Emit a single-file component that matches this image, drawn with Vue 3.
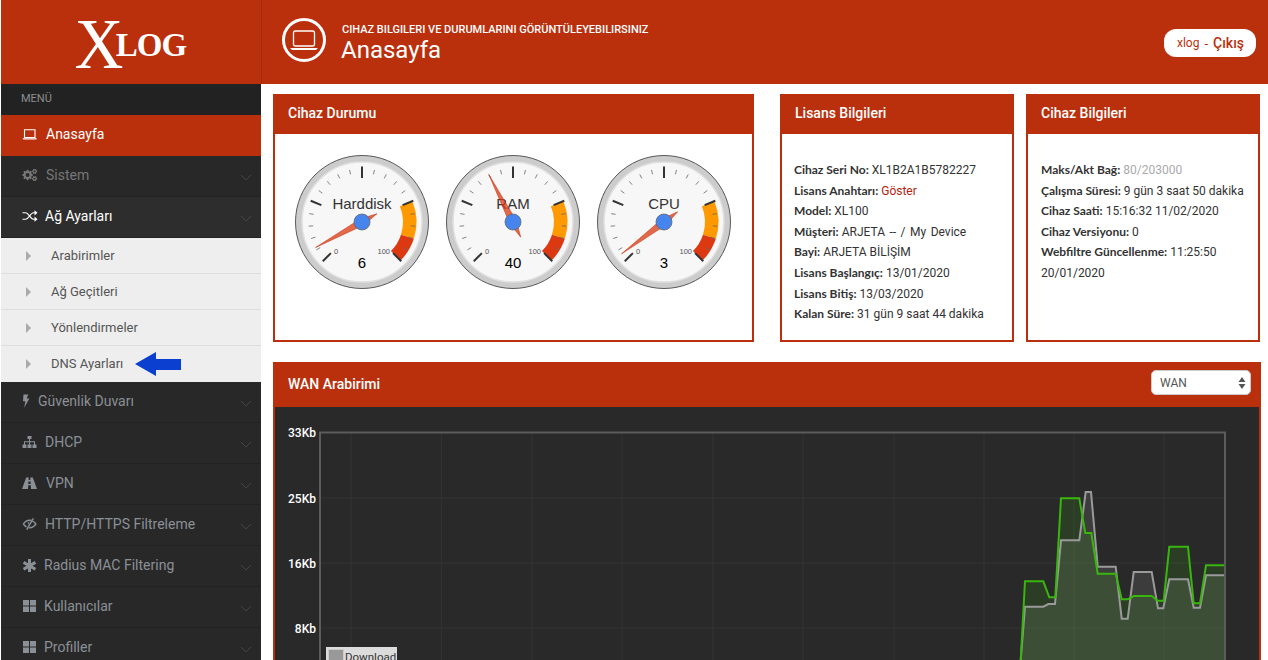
<template>
  <div class="page">
    <aside class="sidebar">
      <div class="logo">
        <span class="logo-x">X</span><span class="logo-log">LOG</span>
      </div>
      <div class="menu-label">MENÜ</div>
      <nav>
        <template v-for="item in menu" :key="item.label">
          <div class="menu-item" :class="{ active: item.active, open: item.open, dim: item.dim }">
            <span class="icon-box" :style="{ width: item.offset + 'px' }">
              <svg class="ico" width="16" height="14" viewBox="0 0 16 14">
                <path v-if="item.fill" :d="item.fill" fill="currentColor" fill-rule="evenodd" />
                <path v-if="item.line" :d="item.line" fill="none" stroke="currentColor" stroke-width="1.1" />
              </svg>
            </span>
            <span>{{ item.label }}</span>
            <svg v-if="!item.active" class="chevron" width="12" height="7" viewBox="0 0 12 7">
              <path d="M1 1l5 5 5-5" fill="none" stroke="currentColor" stroke-width="0.8" />
            </svg>
          </div>
          <div v-if="item.children" class="submenu">
            <div v-for="child in item.children" :key="child" class="sub-item">
              <span class="sub-arrow"></span>
              <span>{{ child }}</span>
              <svg v-if="child === 'DNS Ayarları'" class="blue-arrow" width="46" height="26" viewBox="0 0 46 26">
                <path d="M0 13L21 1v7h25v11H21v6z" fill="#0a3fd0" />
              </svg>
            </div>
          </div>
        </template>
      </nav>
    </aside>

    <div class="content">
      <header class="topbar">
        <svg class="top-icon" width="46" height="46" viewBox="0 0 46 46">
          <circle cx="23" cy="23" r="20.5" fill="none" stroke="#fff" stroke-width="3" />
          <rect x="12.5" y="14" width="21" height="15" rx="2" fill="none" stroke="#fff" stroke-width="1.3" />
          <path d="M9 31h28l-2 2H11z" fill="#fff" />
        </svg>
        <div class="top-text">
          <div class="top-sub">CIHAZ BILGILERI VE DURUMLARINI GÖRÜNTÜLEYEBILIRSINIZ</div>
          <div class="top-title">Anasayfa</div>
        </div>
        <div class="logout">
          <span class="user">xlog</span><span class="dash">-</span><span class="exit">Çıkış</span>
        </div>
      </header>

      <main class="main">
        <div class="top-row">
          <section class="panel status">
            <h3 class="panel-head">Cihaz Durumu</h3>
            <div class="gauges">
              <svg v-for="g in gauges" :key="g.name" width="140" height="140" viewBox="-70 -70 140 140">
                <circle r="66.5" fill="#ccc" stroke="#4a4a4a" stroke-width="0.9" />
                <circle r="60" fill="#f7f7f7" stroke="#e0e0e0" stroke-width="1.5" />
                <path :d="band(75, 90)" fill="#f90" />
                <path :d="band(90, 100)" fill="#dc3912" />
                <path v-for="t in minorTicks" :key="t" :d="tick(t, 49, 53.5)" stroke="#666" stroke-width="0.8" />
                <path v-for="t in majorTicks" :key="t" :d="tick(t, 44, 55.5)" stroke="#333" stroke-width="2" />
                <text class="g-title" y="-13" text-anchor="middle">{{ g.name }}</text>
                <text class="g-small" x="-28" y="32" text-anchor="start">0</text>
                <text class="g-small" x="28" y="32" text-anchor="end">100</text>
                <text class="g-value" y="46" text-anchor="middle">{{ g.value }}</text>
                <path :d="needle(g.value)" fill="#dc3912" fill-opacity="0.75" stroke="#c63310" stroke-width="0.6" />
                <circle r="8" fill="#4684ee" stroke="#666" stroke-width="0.8" />
              </svg>
            </div>
          </section>

          <section class="panel license">
            <h3 class="panel-head">Lisans Bilgileri</h3>
            <div class="info">
              <p v-for="row in license" :key="row[0]">
                <b>{{ row[0] }}:</b> <span :class="row[2]">{{ row[1] }}</span>
              </p>
            </div>
          </section>

          <section class="panel device">
            <h3 class="panel-head">Cihaz Bilgileri</h3>
            <div class="info">
              <p v-for="row in device" :key="row[0]">
                <b>{{ row[0] }}:</b> <span :class="row[2]">{{ row[1] }}</span>
              </p>
            </div>
          </section>
        </div>

        <section class="panel wan">
          <div class="panel-head wan-head">
            <h3>WAN Arabirimi</h3>
            <div class="fake-select">
              <span>WAN</span>
              <svg width="8" height="12" viewBox="0 0 8 12">
                <path d="M4 0l3.500 5h-7zM4 12L.5 7h7z" fill="#555" />
              </svg>
            </div>
          </div>
          <div class="chart">
            <svg width="984" height="300" viewBox="0 0 984 300">
              <path v-for="x in gridX" :key="x" :d="`M${x} 25V300`" stroke="#343434" />
              <path v-for="y in gridY" :key="y" :d="`M45 ${y}H950`" stroke="#343434" />
              <path :d="area(download)" fill="#fff" fill-opacity="0.09" />
              <path :d="area(upload)" fill="#45b51a" fill-opacity="0.15" />
              <path :d="line(download)" fill="none" stroke="#9a9a9a" stroke-width="2" />
              <path :d="line(upload)" fill="none" stroke="#38b60e" stroke-width="2" />
              <path d="M45 300V25.500H950V300" fill="none" stroke="#5c5c5c" stroke-width="2" />
              <text v-for="l in yLabels" :key="l.text" class="y-label" x="41" :y="l.y" text-anchor="end">{{ l.text }}</text>
            </svg>
            <div class="legend">
              <span class="swatch"></span>
              <span>Download</span>
            </div>
          </div>
        </section>
      </main>
    </div>
  </div>
</template>

<script setup>
// cog outline, teeth computed
const gear = (cx, cy, r, teeth) => {
  let d = ''
  const steps = teeth * 4
  for (let i = 0; i < steps; i++) {
    const a = ((i - 0.5) / steps) * Math.PI * 2
    const rad = i % 4 < 2 ? r : r * 0.76
    d += (i ? 'L' : 'M') + (cx + rad * Math.cos(a)).toFixed(2) + ' ' + (cy + rad * Math.sin(a)).toFixed(2)
  }
  const h = r * 0.36
  return d + `zM${cx - h} ${cy}a${h} ${h} 0 1 0 ${2 * h} 0a${h} ${h} 0 1 0 ${-2 * h} 0z`
}

const thLarge = 'M1 1h6v5.500H1zM8 1h6v5.500H8zM1 7.500h6V13H1zM8 7.500h6V13H8z'

const menu = [
  {
    label: 'Anasayfa', active: true, offset: 24,
    line: 'M2.500 2.800h10.500v7.700H2.500z',
    fill: 'M.5 11.300h14.500l-.8 1.200H1.300z'
  },
  {
    label: 'Sistem', dim: true, offset: 24,
    fill: gear(5.6, 7, 5.4, 8) + gear(12.6, 3.4, 2.7, 6) + gear(12.6, 10.6, 2.7, 6)
  },
  {
    label: 'Ağ Ayarları', open: true, offset: 23,
    line: 'M.5 3.800h3.200c3 0 4.600 6.400 7.800 6.400h1.500M.5 10.200h3.200c3 0 4.600-6.400 7.800-6.400h1.500',
    fill: 'M12.500 1.200l3 2.600-3 2.600zM12.500 7.600l3 2.600-3 2.600z'
  },
  { label: 'Güvenlik Duvarı', offset: 16, fill: 'M1.500 .5h4.700L4.700 4.500H7.400L2.200 13.800l1.200-6.500H1z' },
  {
    label: 'DHCP', offset: 23,
    fill: 'M5.500 1h4v3h-4zM0.500 9.500h4v3.500h-4zM5.500 9.500h4v3.500h-4zM10.500 9.500h4v3.500h-4zM7 4h1v2.200h5v3.300h-1V7.200H8v2.300H7V7.200H3v2.300H2V6.200h5z'
  },
  {
    label: 'VPN', offset: 24,
    fill: 'M4.200 1.500h2.500l-.1 2.500h1.800L8.300 1.500h2.500L15 13H9l-.2-3.700H6.200L6 13H0zM6.400 5.500l-.1 2.400h2.400l-.1-2.400z'
  },
  {
    label: 'HTTP/HTTPS Filtreleme', offset: 23,
    fill: 'M.5 7C2.500 3.800 5 2.500 7.700 2.500c.8 0 1.500.1 2.200.3L9 4.300C8.600 4.100 8.100 4 7.700 4 5.500 4 3.700 5.100 2.200 7c.8 1 1.700 1.800 2.800 2.300l-.8 1.200C2.700 9.800 1.500 8.600.5 7zM11 3.800c1.500.7 2.800 1.800 3.800 3.200-1.800 2.900-4.300 4.500-7.100 4.500-.4 0-.8 0-1.200-.1l.9-1.500c2.200.1 4.100-1 5.600-2.900-.8-1-1.700-1.800-2.700-2.300zM10.800 1l1.200.7L5.300 13l-1.200-.7zM7.700 4.800l-.9 1.600-.9 1.500c-.4-1.500.4-3 1.800-3.100z'
  },
  {
    label: 'Radius MAC Filtering', offset: 22,
    fill: 'M6 1h3v4.300l3.700-2.200 1.500 2.600L10.500 7.800l3.700 2.100-1.500 2.600L9 10.400V14H6v-3.600l-3.700 2.100L.8 9.900l3.700-2.100L.8 5.700l1.500-2.600L6 5.300z'
  },
  { label: 'Kullanıcılar', offset: 22, fill: thLarge },
  { label: 'Profiller', offset: 22, fill: thLarge }
]
menu[2].children = ['Arabirimler', 'Ağ Geçitleri', 'Yönlendirmeler', 'DNS Ayarları']

const gauges = [
  { name: 'Harddisk', value: 6 },
  { name: 'RAM', value: 40 },
  { name: 'CPU', value: 3 }
]

const majorTicks = [0, 25, 50, 75, 100]
const minorTicks = []
for (let i = 0; i < 100; i += 5) {
  if (i % 25) minorTicks.push(i)
}

// percentage to point on the dial
const polar = (r, v) => {
  const a = ((-135 + (v / 100) * 270) * Math.PI) / 180
  return [r * Math.sin(a), -r * Math.cos(a)]
}
const pt = (p) => p[0].toFixed(2) + ' ' + p[1].toFixed(2)

const band = (from, to) =>
  `M${pt(polar(54.5, from))}A54.5 54.5 0 0 1 ${pt(polar(54.5, to))}L${pt(polar(41, to))}A41 41 0 0 0 ${pt(polar(41, from))}z`
const tick = (v, r1, r2) => `M${pt(polar(r1, v))}L${pt(polar(r2, v))}`
const needle = (v) => {
  const a = polar(3.5, v + 33.33)
  const b = polar(3.5, v - 33.33)
  return `M${pt(polar(53, v))}L${pt(a)}L${pt(polar(-17, v))}L${pt(b)}z`
}

const license = [
  ['Cihaz Seri No', 'XL1B2A1B5782227'],
  ['Lisans Anahtarı', 'Göster', 'reveal'],
  ['Model', 'XL100'],
  ['Müşteri', 'ARJETA -- / My Device', 'spaced'],
  ['Bayi', 'ARJETA BİLİŞİM'],
  ['Lisans Başlangıç', '13/01/2020'],
  ['Lisans Bitiş', '13/03/2020'],
  ['Kalan Süre', '31 gün 9 saat 44 dakika']
]

const device = [
  ['Maks/Akt Bağ', '80/203000', 'muted'],
  ['Çalışma Süresi', '9 gün 3 saat 50 dakika'],
  ['Cihaz Saati', '15:16:32 11/02/2020'],
  ['Cihaz Versiyonu', '0'],
  ['Webfiltre Güncellenme', '11:25:50 20/01/2020']
]

const gridX = [76, 166.3, 257, 347, 438, 528, 619, 709, 799, 889]
const gridY = [91, 156, 221]
const yLabels = [
  { text: '33Kb', y: 30 },
  { text: '25Kb', y: 96 },
  { text: '16Kb', y: 161 },
  { text: '8Kb', y: 226 }
]

// points read off the chart, x/y in 3x units from the plot's right part
const toLocal = (pts) => pts.map(([x, y]) => [705 + x / 3, 53 + y / 3])
const download = toLocal([
  [122, 600], [135, 440], [190, 440], [205, 432], [225, 432], [243, 241], [298, 241], [317, 96], [333, 96],
  [353, 320], [407, 320], [425, 476], [443, 476], [461, 336], [515, 336], [534, 445], [550, 445], [568, 358],
  [624, 358], [641, 443], [660, 443], [678, 346], [732, 346]
])
const upload = toLocal([
  [122, 600], [135, 364], [190, 364], [208, 412], [226, 412], [243, 115], [298, 115], [316, 219], [334, 219],
  [353, 341], [407, 341], [425, 418], [443, 418], [461, 408], [515, 408], [533, 422], [551, 422], [568, 260],
  [624, 260], [641, 430], [660, 430], [678, 316], [732, 316]
])
const line = (pts) => 'M' + pts.map((p) => p.map((n) => n.toFixed(1)).join(' ')).join('L')
const area = (pts) => `${line(pts)}V300H${pts[0][0].toFixed(1)}z`
</script>

<style scoped>
.page {
  display: flex;
  height: 660px;
  padding-left: 1px;
  box-sizing: border-box;
  overflow: hidden;
  font-family: Roboto, "Liberation Sans", sans-serif;
  background: #fff;
}

.sidebar {
  flex: 0 0 260px;
  width: 260px;
  background: #282828;
}

.logo {
  height: 84px;
  background: #ba300d;
  display: flex;
  justify-content: center;
  align-items: flex-start;
  color: #fff;
  font-family: "Liberation Serif", serif;
  padding-right: 3px;
  box-sizing: border-box;
}

.logo-x {
  font-size: 72px;
  line-height: 84px;
  height: 84px;
  margin-top: 2px;
  transform: scaleX(0.94);
  margin-right: -9px;
}

.logo-log {
  font-size: 33px;
  font-weight: 700;
  line-height: 30px;
  margin-top: 30px;
  letter-spacing: -1px;
}

.menu-label {
  height: 31px;
  line-height: 30px;
  background: #222;
  color: #8e8e8e;
  font-size: 11px;
  padding-left: 20px;
}

.menu-item {
  position: relative;
  display: flex;
  align-items: center;
  height: 41px;
  box-sizing: border-box;
  padding: 0 0 2px 21px;
  font-size: 14px;
  color: #8b9096;
  background: #282828;
  border-bottom: 1px solid #222;
}

.menu-item.active {
  background: #ba300d;
  color: #fff;
  border-bottom-color: #ba300d;
}

.menu-item.dim {
  color: #777;
}

.menu-item.open {
  background: #2d2d2d;
  color: #fff;
}

.icon-box {
  display: flex;
  flex: none;
  align-items: center;
}

.chevron {
  position: absolute;
  right: 9px;
  top: 18px;
  color: #4c4c4c;
}

.submenu {
  background: #eee;
}

.sub-item {
  display: flex;
  align-items: center;
  height: 36px;
  box-sizing: border-box;
  padding-left: 25px;
  font-size: 13px;
  color: #555;
  border-bottom: 1px solid #ddd;
}

.sub-item:last-child {
  border-bottom-color: #eee;
}

.sub-arrow {
  width: 0;
  height: 0;
  margin-right: 20px;
  border-left: 5px solid #aaa;
  border-top: 5px solid transparent;
  border-bottom: 5px solid transparent;
}

.blue-arrow {
  margin-left: 12px;
}

.content {
  flex: 1;
  min-width: 0;
}

.topbar {
  display: flex;
  align-items: center;
  height: 84px;
  box-sizing: border-box;
  background: #ba300d;
  border-left: 1px solid #a52a0b;
  padding: 0 12px 0 19px;
  color: #fff;
}

.top-icon {
  flex: none;
  margin-top: -4px;
}

.top-text {
  margin-left: 15px;
  margin-top: 2px;
}

.top-sub {
  font-size: 11px;
  font-weight: 500;
  line-height: 13px;
}

.top-title {
  font-size: 24px;
  line-height: 28px;
  margin-left: -1px;
}

.logout {
  display: flex;
  align-items: center;
  margin-left: auto;
  margin-top: 2px;
  height: 28px;
  width: 92px;
  box-sizing: border-box;
  padding-left: 13px;
  border-radius: 12px;
  background: #fff;
  color: #ba300d;
  font-size: 14px;
}

.user {
  font-size: 12px;
}

.dash {
  margin: 0 5px 0 5px;
  font-size: 13px;
}

.exit {
  font-weight: 500;
}

.main {
  padding: 10px 7px 0 12px;
}

.top-row {
  display: flex;
  align-items: stretch;
  margin-bottom: 20px;
}

.panel {
  box-sizing: border-box;
  border: 2px solid #ba300d;
  border-top: 0;
  background: #fff;
}

.panel-head {
  margin: 0;
  height: 40px;
  line-height: 38px;
  padding-left: 13px;
  background: #ba300d;
  color: #fff;
  font-size: 14px;
  font-weight: 500;
}

.status {
  width: 481px;
  height: 248px;
  margin-right: 26px;
}

.license {
  width: 234px;
  margin-right: 12px;
}

.device {
  width: 234px;
}

.device .info {
  padding-left: 13px;
}

.gauges {
  display: flex;
  gap: 11px;
  padding: 18px 0 0 17px;
}

.g-title {
  font-family: "Liberation Sans", Arial, sans-serif;
  font-size: 15px;
  fill: #333;
}

.g-small {
  font-family: "Liberation Sans", Arial, sans-serif;
  font-size: 7.5px;
  fill: #555;
}

.g-value {
  font-family: "Liberation Sans", Arial, sans-serif;
  font-size: 15px;
  fill: #000;
}

.info {
  padding: 26px 8px 0 12px;
  font-size: 12px;
  line-height: 20.6px;
  color: #333;
}

.info p {
  margin: 0;
}

.info b {
  font-family: Lato, Roboto, sans-serif;
  font-weight: 700;
  color: #333;
}

.reveal {
  color: #b5230d;
}

.muted {
  color: #aaa;
}

.spaced {
  word-spacing: 1.5px;
}

.wan {
  height: 400px;
  width: 988px;
  background: #292929;
}

.wan-head {
  display: flex;
  align-items: center;
  justify-content: space-between;
  height: 45px;
  padding-right: 8px;
}

.wan-head h3 {
  margin: -2px 0 0;
  font-size: 14px;
  font-weight: 500;
}

.fake-select {
  display: flex;
  align-items: center;
  justify-content: space-between;
  width: 100px;
  height: 25px;
  margin-top: -4px;
  box-sizing: border-box;
  padding: 0 4px 0 8px;
  border: 1px solid #ccc;
  border-radius: 5px;
  background: #fff;
  color: #555;
  font-size: 12px;
  font-weight: 400;
  line-height: 1;
}

.chart {
  position: relative;
}

.chart svg {
  display: block;
}

.y-label {
  font-family: Roboto, sans-serif;
  font-size: 12px;
  font-weight: 500;
  fill: #fff;
}

.legend {
  position: absolute;
  left: 51px;
  top: 240px;
  display: flex;
  align-items: flex-start;
  gap: 1px;
  width: 71px;
  height: 30px;
  padding: 2px 0 0 2px;
  box-sizing: border-box;
  background: #dcdcdc;
  color: #333;
  font-size: 11.5px;
  line-height: 16px;
}

.swatch {
  flex: none;
  width: 14px;
  height: 10px;
  background: #999;
  border: 1px solid #ccc;
}
</style>

<style>
html,
body {
  margin: 0;
  overflow: hidden;
}
</style>
